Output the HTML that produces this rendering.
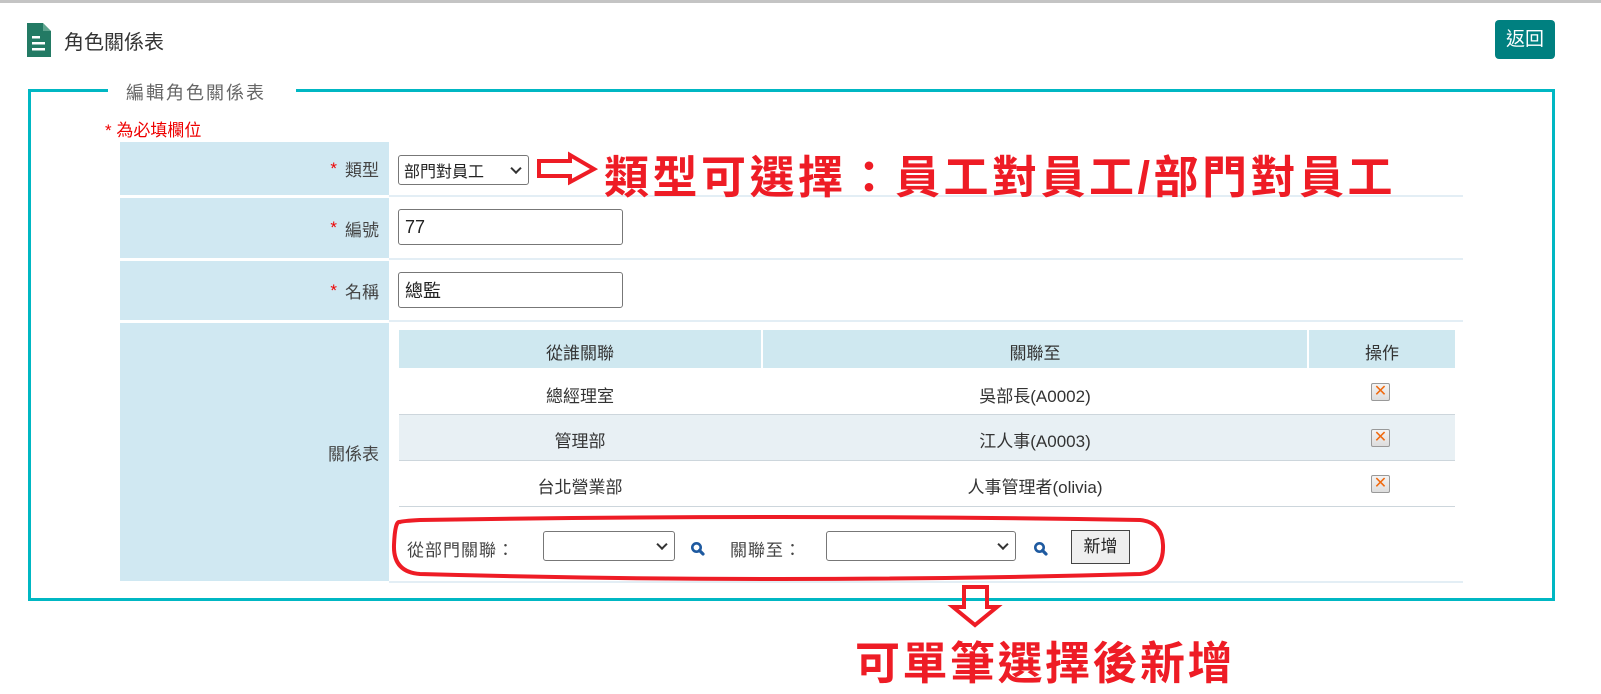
<!DOCTYPE html>
<html><head><meta charset="utf-8"><style>
*{box-sizing:border-box;margin:0;padding:0}
body{width:1601px;height:694px;background:#fff;position:relative;overflow:hidden;font-family:"Liberation Sans","Noto Sans CJK TC",sans-serif;color:#333}
.a{position:absolute}
.lab{position:absolute;left:120px;width:269px;background:#d0e8f2;text-align:right;padding-right:10px;font-size:17px;color:#444;display:flex;align-items:center;justify-content:flex-end}
.lab b{color:#e00;font-weight:normal;margin-right:8px}
.hl{position:absolute;left:389px;width:1074px;height:2px;background:#e3eef5}
.inp{position:absolute;border:1px solid #777;border-radius:3px;background:#fff;font-size:18px;padding-left:6px;display:flex;align-items:center;color:#222}
.cell{position:absolute;font-size:17px;color:#333;text-align:center}
.x{position:absolute;left:1371px;width:19px;height:18px;border:1px solid #999;border-radius:2px;background:linear-gradient(#f4f4f4,#ddd);color:#f06a10;font-size:16px;line-height:16px;text-align:center}
.big{position:absolute;color:#ee1c25;font-weight:bold;font-size:45px;letter-spacing:3.5px;white-space:nowrap}
.chev{position:absolute;right:8px;top:50%;width:8px;height:8px;border-right:2px solid #333;border-bottom:2px solid #333;transform:translateY(-70%) rotate(45deg)}
</style></head><body>
<div class="a" style="left:0;top:0;width:1601px;height:3px;background:#c4c4c4"></div>
<svg class="a" style="left:26px;top:23px" width="26" height="34" viewBox="0 0 26 34"><path d="M1 0H17L25 8V34H1Z" fill="#237a64"/><path d="M17 0V8H25Z" fill="#fff"/><path d="M17 0L25 8H17Z" fill="#5fa58f"/><rect x="6" y="13" width="8" height="2.5" fill="#fff"/><rect x="6" y="19" width="13" height="2.5" fill="#fff"/><rect x="6" y="25" width="13" height="2.5" fill="#fff"/></svg>
<div class="a" style="left:64px;top:26px;font-size:20px;color:#333">角色關係表</div>
<div class="a" style="left:1495px;top:20px;width:60px;height:39px;background:#008080;border-radius:4px;color:#fff;font-size:19px;text-align:center;line-height:39px">返回</div>

<div class="a" style="left:28px;top:89px;width:1527px;height:512px;border:3px solid #00b7c3"></div>
<div class="a" style="left:108px;top:78px;width:188px;height:24px;background:#fff"></div>
<div class="a" style="left:126px;top:79px;font-size:18px;color:#666;letter-spacing:2px">編輯角色關係表</div>
<div class="a" style="left:105px;top:116px;font-size:17px;color:#e00">* 為必填欄位</div>

<div class="lab" style="top:142px;height:53px"><b>*</b>類型</div>
<div class="lab" style="top:198px;height:60px"><b>*</b>編號</div>
<div class="lab" style="top:261px;height:59px"><b>*</b>名稱</div>
<div class="lab" style="top:323px;height:258px">關係表</div>
<div class="hl" style="top:195px"></div><div class="hl" style="top:258px"></div><div class="hl" style="top:320px"></div><div class="hl" style="top:581px"></div>

<div class="inp" style="left:398px;top:155px;width:131px;height:30px;font-size:16px;padding-left:5px">部門對員工<span class="chev"></span></div>
<div class="inp" style="left:398px;top:209px;width:225px;height:36px">77</div>
<div class="inp" style="left:398px;top:272px;width:225px;height:36px">總監</div>

<div class="a" style="left:399px;top:330px;width:1056px;height:38px;background:#cfe8f0"></div>
<div class="a" style="left:761px;top:330px;width:2px;height:38px;background:#fff"></div>
<div class="a" style="left:1307px;top:330px;width:2px;height:38px;background:#fff"></div>
<div class="cell" style="left:399px;width:362px;top:339px">從誰關聯</div>
<div class="cell" style="left:763px;width:544px;top:339px">關聯至</div>
<div class="cell" style="left:1309px;width:146px;top:339px">操作</div>
<div class="a" style="left:399px;top:415px;width:1056px;height:45px;background:#e8f0f4"></div>
<div class="a" style="left:399px;top:414px;width:1056px;height:1px;background:#cdd6dc"></div>
<div class="a" style="left:399px;top:460px;width:1056px;height:1px;background:#cdd6dc"></div>
<div class="a" style="left:399px;top:506px;width:1056px;height:1px;background:#cdd6dc"></div>
<div class="cell" style="left:399px;width:362px;top:382px">總經理室</div>
<div class="cell" style="left:763px;width:544px;top:382px">吳部長(A0002)</div>
<div class="cell" style="left:399px;width:362px;top:427px">管理部</div>
<div class="cell" style="left:763px;width:544px;top:427px">江人事(A0003)</div>
<div class="cell" style="left:399px;width:362px;top:473px">台北營業部</div>
<div class="cell" style="left:763px;width:544px;top:473px">人事管理者(olivia)</div>
<div class="x" style="top:383px">✕</div><div class="x" style="top:429px">✕</div><div class="x" style="top:475px">✕</div>

<div class="a" style="left:407px;top:536px;font-size:17px;color:#444;letter-spacing:1px">從部門關聯：</div>
<div class="inp" style="left:543px;top:531px;width:132px;height:30px"><span class="chev"></span></div>
<svg class="a" style="left:690px;top:541px" width="16" height="16" viewBox="0 0 16 16"><circle cx="6.5" cy="6.5" r="4.2" fill="none" stroke="#1e5aa0" stroke-width="2.6"/><path d="M9.5 9.5L13 13" stroke="#1e5aa0" stroke-width="3.2" stroke-linecap="round"/></svg>
<div class="a" style="left:730px;top:536px;font-size:17px;color:#444;letter-spacing:1px">關聯至：</div>
<div class="inp" style="left:826px;top:531px;width:190px;height:30px"><span class="chev"></span></div>
<svg class="a" style="left:1033px;top:541px" width="16" height="16" viewBox="0 0 16 16"><circle cx="6.5" cy="6.5" r="4.2" fill="none" stroke="#1e5aa0" stroke-width="2.6"/><path d="M9.5 9.5L13 13" stroke="#1e5aa0" stroke-width="3.2" stroke-linecap="round"/></svg>
<div class="a" style="left:1071px;top:530px;width:59px;height:34px;border:1px solid #444;background:#efefef;font-size:17px;text-align:center;line-height:32px;color:#222">新增</div>

<svg class="a" style="left:0;top:0" width="1601" height="694">
<path d="M400 522 Q395 520 394 545 Q393 572 420 574 Q780 584 1140 574 Q1164 572 1163 545 Q1162 522 1140 520 Q780 514 420 520 Q402 521 400 522Z" fill="none" stroke="#ee1c25" stroke-width="4"/>
<path d="M539 161H570V155L594 169L570 182V176H539Z" fill="none" stroke="#ee1c25" stroke-width="4" stroke-linejoin="miter"/>
<path d="M964 587H987V607H997L975 625L953 607H964Z" fill="none" stroke="#ee1c25" stroke-width="4"/>
</svg>
<div class="big" style="left:604px;top:141px">類型可選擇：員工對員工/部門對員工</div>
<div class="big" style="left:855px;top:627px;letter-spacing:2.5px">可單筆選擇後新增</div>
</body></html>
